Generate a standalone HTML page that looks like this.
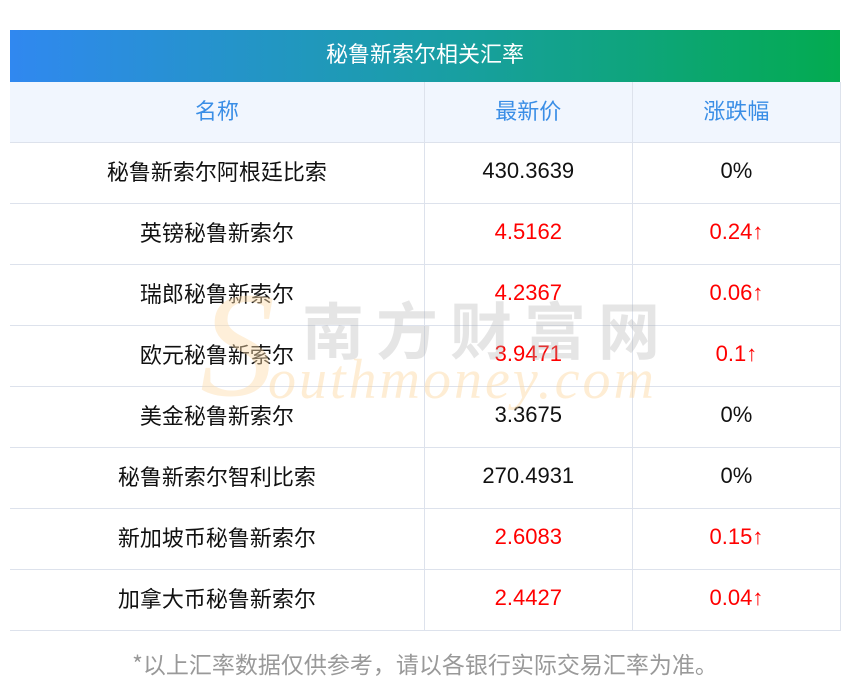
<!DOCTYPE html>
<html><head><meta charset="utf-8"><style>
body{margin:0;width:850px;height:697px;background:#fff;font-family:"Liberation Sans","Noto Sans CJK SC",sans-serif;position:relative;overflow:hidden}
.title{position:absolute;left:10px;top:30px;width:830px;height:52px;background:linear-gradient(90deg,#3088f0,#1a9ea8 50%,#03ab50);color:#fff;font-size:22px;text-align:center;line-height:46px;font-family:"Noto Sans CJK SC",sans-serif}
table{position:absolute;left:10px;top:82px;width:831px;border-collapse:collapse;font-size:22px;color:#111}
td{border:1px solid #dde2ec;height:56px;text-align:center;padding:0 0 4px 0;line-height:28px}
td:first-child{border-left:none;font-family:"Noto Sans CJK SC",sans-serif}
tr:first-child td{border-top:none}
tr.h td{background:#f1f6fe;color:#3a8ee6;font-family:"Noto Sans CJK SC",sans-serif}
.r{color:#f00}
.wm{position:absolute;pointer-events:none}
.foot{position:absolute;left:0;width:850px;top:646px;text-align:center;color:#999;font-size:23px;font-family:"Noto Sans CJK SC",sans-serif;line-height:34px}
</style></head><body>
<div class="title">秘鲁新索尔相关汇率</div>
<table>
<colgroup><col style="width:414px"><col style="width:208px"><col style="width:208px"></colgroup>
<tr class="h"><td>名称</td><td>最新价</td><td>涨跌幅</td></tr>
<tr><td>秘鲁新索尔阿根廷比索</td><td>430.3639</td><td>0%</td></tr>
<tr><td>英镑秘鲁新索尔</td><td class="r">4.5162</td><td class="r">0.24↑</td></tr>
<tr><td>瑞郎秘鲁新索尔</td><td class="r">4.2367</td><td class="r">0.06↑</td></tr>
<tr><td>欧元秘鲁新索尔</td><td class="r">3.9471</td><td class="r">0.1↑</td></tr>
<tr><td>美金秘鲁新索尔</td><td>3.3675</td><td>0%</td></tr>
<tr><td>秘鲁新索尔智利比索</td><td>270.4931</td><td>0%</td></tr>
<tr><td>新加坡币秘鲁新索尔</td><td class="r">2.6083</td><td class="r">0.15↑</td></tr>
<tr><td>加拿大币秘鲁新索尔</td><td class="r">2.4427</td><td class="r">0.04↑</td></tr>
</table>
<div class="wm" style="left:200px;top:270px;font-size:150px;font-family:'Liberation Serif',serif;font-style:italic;color:rgba(253,220,170,0.45);line-height:150px">S</div>
<div class="wm" style="left:302px;top:292px;font-size:62px;color:rgba(170,170,170,0.3);letter-spacing:12px;line-height:70px;font-family:'Noto Sans CJK SC',sans-serif;font-weight:bold">南方财富网</div>
<div class="wm" style="left:268px;top:350px;font-size:56px;font-family:'Liberation Serif',serif;font-style:italic;color:rgba(253,215,160,0.45);letter-spacing:3px;line-height:60px">outhmoney.com</div>
<div class="foot">*以上汇率数据仅供参考，请以各银行实际交易汇率为准。</div>
</body></html>
